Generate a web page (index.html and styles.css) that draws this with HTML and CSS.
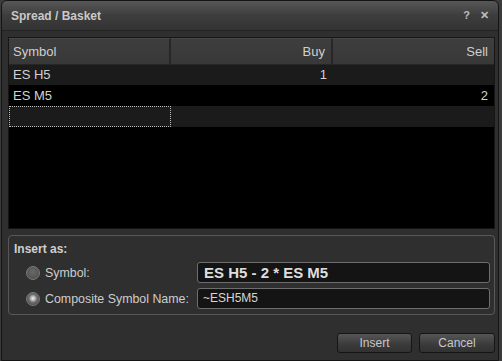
FILE: index.html
```html
<!DOCTYPE html>
<html lang="en">
<head>
  <meta charset="UTF-8" />
  <title>Spread / Basket</title>
  <link rel="stylesheet" href="styles.css">
</head>
<body>
  <div class="window">
    <div class="titlebar">
      <span class="title">Spread / Basket</span>
      <span class="title-icons"><span class="help">?</span><span class="close">&#x2715;</span></span>
    </div>

    <div class="content">
      <div class="grid">
        <div class="grid-row grid-head">
          <div class="head-cell">Symbol</div>
          <div class="head-cell num">Buy</div>
          <div class="head-cell num last">Sell</div>
        </div>
        <div class="grid-row alt">
          <div class="cell">ES H5</div>
          <div class="cell num">1</div>
          <div class="cell num"></div>
        </div>
        <div class="grid-row">
          <div class="cell">ES M5</div>
          <div class="cell num"></div>
          <div class="cell num">2</div>
        </div>
        <div class="grid-row alt">
          <div class="cell focused"></div>
          <div class="cell num"></div>
          <div class="cell num"></div>
        </div>
      </div>

      <div class="groupbox">
        <div class="group-title">Insert as:</div>
        <div class="option">
          <span class="radio"></span>
          <span class="option-label">Symbol:</span>
          <div class="field big">ES H5 - 2 * ES M5</div>
        </div>
        <div class="option">
          <span class="radio checked"></span>
          <span class="option-label">Composite Symbol Name:</span>
          <div class="field">~ESH5M5</div>
        </div>
      </div>

      <div class="actions">
        <button class="btn">Insert</button>
        <button class="btn cancel">Cancel</button>
      </div>
    </div>
  </div>
</body>
</html>
```

FILE: styles.css
```css
body {
  margin: 0;
  background: #3b3b3b;
  font-family: "Liberation Sans", Arial, sans-serif;
  color: #d2d2d2;
}
.window {
  margin-left: 1px;
  width: 496px;
  height: 359px;
  border: 1px solid #141414;
  border-radius: 6px 6px 0 0;
  background: #2f2f2f;
  overflow: hidden;
}
.titlebar {
  height: 29px;
  border-bottom: 1px solid #232323;
  background: linear-gradient(#575757, #3d3d3d 50%, #333333);
  display: flex;
  align-items: center;
  justify-content: space-between;
  padding: 0 9px 0 9px;
}
.title {
  font-size: 12px;
  font-weight: bold;
  color: #c9c9c9;
  padding-top: 1px;
}
.title-icons {
  display: flex;
  gap: 10px;
  font-size: 11px;
  font-weight: bold;
  color: #bdbdbd;
}
.content {
  padding: 6px 3px 0 6px;
}
.grid {
  height: 192px;
  background: #000;
  border: 1px solid #161616;
  box-sizing: border-box;
  font-size: 13px;
}
.grid-row {
  display: grid;
  grid-template-columns: 162px 162px 1fr;
  height: 21px;
  line-height: 21px;
}
.grid-row.alt {
  background: #1b1b1b;
}
.grid-head {
  height: 26px;
  line-height: 25px;
  background: #262626;
}
.head-cell {
  background: linear-gradient(#3e3e3e, #383838);
  border-top: 1px solid #474747;
  border-right: 2px solid #272727;
  border-bottom: 1px solid #262626;
  padding: 0 5px 0 4px;
  color: #cfcfcf;
}
.head-cell.last {
  border-right: none;
}
.cell {
  padding: 0 6px 0 4px;
}
.num {
  text-align: right;
}
.head-cell.num {
  padding-right: 6px;
}
.focused {
  outline: 1px dotted #bcbcbc;
  outline-offset: -1px;
}
.groupbox {
  margin-top: 6px;
  height: 80px;
  box-sizing: border-box;
  border: 1px solid #585858;
  border-radius: 4px;
  padding: 6px 4px 0 5px;
}
.group-title {
  font-size: 12px;
  font-weight: bold;
  color: #cfcfcf;
  line-height: 14px;
  margin-bottom: 6px;
}
.option {
  display: flex;
  align-items: center;
  height: 21px;
  margin-bottom: 5px;
}
.radio {
  width: 12px;
  height: 12px;
  border-radius: 50%;
  border: 1px solid #7a7a7a;
  background: radial-gradient(circle at 50% 40%, #6a6a6a, #4a4a4a);
  margin-left: 12px;
  margin-right: 5px;
}
.radio.checked {
  background: radial-gradient(circle at 50% 45%, #f0f0f0 0, #bdbdbd 2px, #707070 4px, #4a4a4a 7px);
}
.option-label {
  font-size: 12.4px;
  width: 152px;
  color: #cdcdcd;
}
.field {
  flex: 1;
  height: 21px;
  box-sizing: border-box;
  border: 1px solid #6e6e6e;
  border-radius: 3px;
  background: #141414;
  font-size: 12px;
  line-height: 19px;
  padding-left: 5px;
  color: #d6d6d6;
}
.field.big {
  font-size: 15px;
  font-weight: bold;
  padding-left: 6px;
  color: #dedede;
}
.actions {
  display: flex;
  justify-content: flex-end;
  gap: 7px;
  margin-top: 18px;
}
.btn {
  width: 75px;
  height: 20px;
  border: 1px solid #151515;
  border-radius: 3px;
  background: linear-gradient(#565656, #3a3a3a 60%, #323232);
  color: #c8c8c8;
  font-family: "Liberation Sans", Arial, sans-serif;
  font-size: 12px;
  padding: 0;
}
.btn.cancel {
  width: 76px;
}
```
